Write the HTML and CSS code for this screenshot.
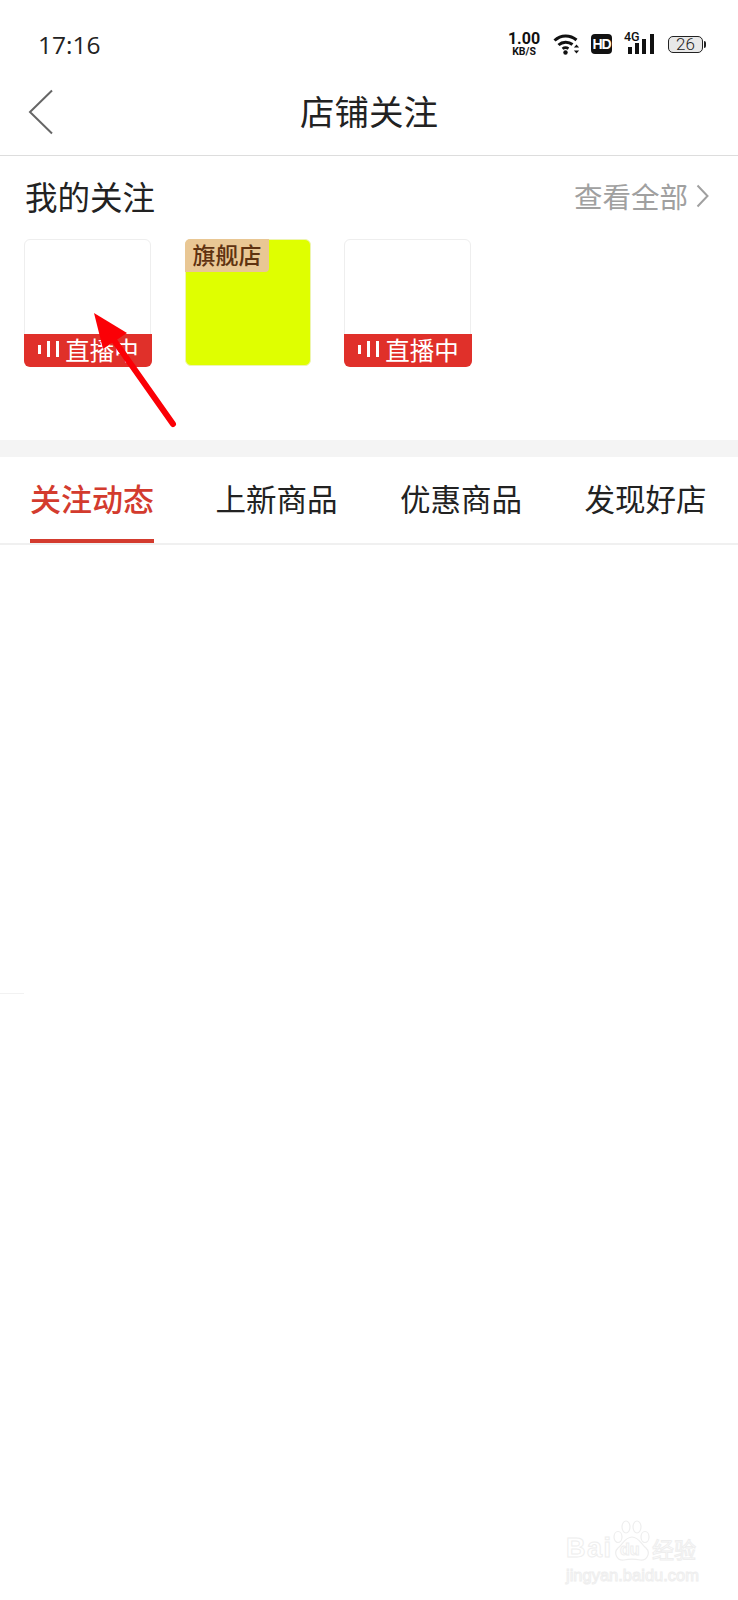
FILE: index.html
```html
<!DOCTYPE html>
<html lang="zh-CN">
<head>
    <meta charset="UTF-8">
    <meta name="viewport" content="width=device-width, initial-scale=1.0">
    <title>店铺关注</title>
    <link rel="stylesheet" href="styles.css">
</head>
<body>

    <div class="status">
        <span class="time">17:16</span>
        <div class="status-icons">
            <div class="speed">
                <span class="speed-num">1.00</span>
                <span class="speed-unit">KB/S</span>
            </div>
            <svg class="wifi" width="28" height="22" viewBox="0 0 28 22">
                <path d="M1.5 7.5C8 1.5 17 1.5 23.5 7" fill="none" stroke="#111" stroke-width="3"/>
                <path d="M5.5 12C9.5 8.3 15.5 8.3 19.5 11.5" fill="none" stroke="#111" stroke-width="3"/>
                <path d="M9.5 15.8C11.3 14.4 13.7 14.4 15.5 15.6" fill="none" stroke="#111" stroke-width="2.6"/>
                <circle cx="12.5" cy="19.5" r="2.2" fill="#111"/>
                <path d="M23.5 11.5l2.6 3h-5.2zM23.5 20.5l2.6-3h-5.2z" fill="#111"/>
            </svg>
            <span class="hd">HD</span>
            <div class="signal">
                <span class="net">4G</span>
                <svg width="26" height="20" viewBox="0 0 26 20">
                    <rect x="0" y="13" width="4" height="7" fill="#111"/>
                    <rect x="7" y="9" width="4" height="11" fill="#111"/>
                    <rect x="14" y="5" width="4" height="15" fill="#111"/>
                    <rect x="22" y="0" width="4" height="20" fill="#111"/>
                </svg>
            </div>
            <div class="battery"><span class="battery-num">26</span></div>
        </div>
    </div>

    <div class="nav">
        <svg class="back" width="26" height="46" viewBox="0 0 26 46">
            <path d="M24 1.5L2 23l22 21.5" fill="none" stroke="#666" stroke-width="2"/>
        </svg>
        <h1 class="nav-title">店铺关注</h1>
    </div>

    <div class="follow">
        <div class="follow-head">
            <span class="follow-title">我的关注</span>
            <span class="follow-all">查看全部
                <svg width="13" height="24" viewBox="0 0 13 24">
                    <path d="M1.5 1.5L11.5 12 1.5 22.5" fill="none" stroke="#a0a0a0" stroke-width="2"/>
                </svg>
            </span>
        </div>
        <div class="cards">
            <div class="card">
                <div class="live">
                    <span class="live-bars"><i></i><i></i><i></i></span>直播中
                </div>
            </div>
            <div class="card card-green">
                <span class="tag">旗舰店</span>
            </div>
            <div class="card">
                <div class="live">
                    <span class="live-bars"><i></i><i></i><i></i></span>直播中
                </div>
            </div>
        </div>
    </div>

    <div class="band"></div>

    <div class="tabs">
        <div class="tab tab-active">关注动态</div>
        <div class="tab">上新商品</div>
        <div class="tab">优惠商品</div>
        <div class="tab">发现好店</div>
    </div>

    <!-- annotation arrow drawn over the first card -->
    <svg class="arrow" width="100" height="125" viewBox="0 0 100 125">
        <path d="M3 2L36 22 12 38z" fill="#fb0006"/>
        <path d="M20 25L82 113" fill="none" stroke="#fb0006" stroke-width="6" stroke-linecap="round"/>
    </svg>

    <div class="edge-mark"></div>

    <!-- watermark -->
    <div class="wm">
        <div class="wm-top">
            <span class="wm-bai">Bai</span>
            <svg class="wm-paw" width="40" height="42" viewBox="0 0 40 42">
                <g fill="#fff" stroke="#eee" stroke-width="1.2">
                    <ellipse cx="6" cy="17" rx="4" ry="5.5"/>
                    <ellipse cx="14" cy="7" rx="4" ry="6"/>
                    <ellipse cx="25" cy="7" rx="4" ry="6"/>
                    <ellipse cx="33" cy="17" rx="4" ry="5.5"/>
                    <path d="M20 17C13 17 11 24 6 28C1 33 5 41 12 40C17 39 23 39 28 40C35 41 39 33 34 28C29 24 27 17 20 17z"/>
                </g>
            </svg>
            <span class="wm-du">du</span>
            <span class="wm-cn">经验</span>
        </div>
        <div class="wm-url">jingyan.baidu.com</div>
    </div>

</body>
</html>
```

FILE: styles.css
```css
body {
    margin: 0;
    height: 1600px;
    position: relative;
    overflow: hidden;
    background-color: #fff;
    color: #222;
    font-family: "Noto Sans CJK SC", "Noto Sans", sans-serif;
}

/* status bar */
.status {
    height: 75px;
    box-sizing: border-box;
    padding: 28px 35px 0 38px;
    display: flex;
    justify-content: space-between;
    align-items: flex-start;
}

.time {
    font-family: "Open Sans", sans-serif;
    font-size: 24.5px;
    line-height: 33px;
    color: #222;
}

.status-icons {
    display: flex;
    align-items: center;
    height: 32px;
}

.speed {
    width: 32px;
    margin-right: 13px;
    display: flex;
    flex-direction: column;
    align-items: center;
    font-family: Roboto, sans-serif;
    font-weight: 700;
    color: #111;
}

.speed-num {
    font-size: 16px;
    line-height: 14px;
}

.speed-unit {
    font-size: 10.5px;
    line-height: 11px;
}

.wifi {
    margin-right: 10px;
}

.hd {
    width: 21px;
    height: 20px;
    margin-right: 12px;
    background-color: #111;
    border-radius: 4px;
    color: #fff;
    font-family: "Liberation Sans", sans-serif;
    font-weight: 700;
    font-size: 14px;
    line-height: 20px;
    text-align: center;
    letter-spacing: -1px;
}

.signal {
    width: 30px;
    margin-right: 14px;
    display: flex;
    position: relative;
    justify-content: flex-end;
}

.net {
    position: absolute;
    left: 0;
    top: -3px;
    font-family: Roboto, sans-serif;
    font-weight: 500;
    font-size: 12.5px;
    line-height: 12px;
    color: #111;
}

.battery {
    width: 33px;
    height: 15px;
    border: 1.5px solid #222;
    border-radius: 5px;
    background-color: #e8e8e8;
    position: relative;
    text-align: center;
}

.battery::after {
    content: "";
    position: absolute;
    right: -4px;
    top: 4px;
    width: 2px;
    height: 7px;
    background-color: #222;
    border-radius: 0 2px 2px 0;
}

.battery-num {
    font-family: Roboto, sans-serif;
    font-weight: 300;
    font-size: 17px;
    line-height: 15px;
    display: block;
    color: #222;
}

/* nav */
.nav {
    height: 80px;
    border-bottom: 1px solid #ddd;
    display: flex;
    justify-content: center;
    position: relative;
}

.back {
    position: absolute;
    left: 28px;
    top: 14px;
}

.nav-title {
    margin: 0;
    font-size: 34.5px;
    font-weight: 400;
    line-height: 70px;
    color: #222;
}

/* my follows */
.follow {
    height: 284px;
    box-sizing: border-box;
    padding-top: 20px;
}

.follow-head {
    display: flex;
    justify-content: space-between;
    align-items: center;
    padding: 0 29px 0 25px;
    height: 40px;
    margin-bottom: 23px;
}

.follow-title {
    font-size: 32.5px;
    line-height: 40px;
    color: #222;
}

.follow-all {
    display: flex;
    align-items: center;
    gap: 8px;
    font-size: 28.5px;
    line-height: 40px;
    color: #a0a0a0;
}

.cards {
    display: flex;
    gap: 33px;
    padding-left: 24px;
}

.card {
    width: 127px;
    height: 127px;
    box-sizing: border-box;
    border: 1.5px solid #eee;
    border-radius: 6px;
    display: flex;
    flex-direction: column;
    justify-content: flex-end;
}

.card-green {
    background-color: #dfff00;
    border-color: #eef5b0;
    justify-content: flex-start;
    align-items: flex-start;
    margin-left: 1px;
    width: 126px;
}

.tag {
    margin: -1.5px 0 0 -1.5px;
    width: 84px;
    height: 33px;
    padding-left: 1px;
    box-sizing: border-box;
    background-color: #e9c794;
    border-radius: 5px 0 4px 0;
    color: #5f3210;
    font-size: 23px;
    font-weight: 500;
    line-height: 31px;
    text-align: center;
}

.live {
    height: 33px;
    box-sizing: border-box;
    padding: 0 0 2px 2px;
    margin: 0 -1.5px -1.5px;
    background-color: #e0302a;
    border-radius: 0 0 6px 6px;
    color: #fff;
    font-size: 24.5px;
    line-height: 31px;
    display: flex;
    align-items: center;
    justify-content: center;
    gap: 6px;
}

.live-bars {
    display: flex;
    align-items: center;
    gap: 6px;
}

.live-bars i {
    display: block;
    width: 3px;
    height: 16px;
    background-color: #fff;
}

.live-bars i:first-child {
    height: 9px;
}

.band {
    height: 17px;
    background-color: #f4f4f4;
}

/* tabs */
.tabs {
    display: flex;
    gap: 60.5px;
    padding-left: 30px;
    border-bottom: 2px solid #f0f0f0;
}

.tab {
    width: 124px;
    height: 86px;
    box-sizing: border-box;
    text-align: center;
    font-size: 30.5px;
    line-height: 82px;
    color: #222;
    white-space: nowrap;
}

.tab-active {
    font-size: 31px;
    font-weight: 500;
    color: #d33b2e;
    border-bottom: 4px solid #d33b2e;
}

/* overlays */
.arrow {
    position: absolute;
    left: 91px;
    top: 311px;
}

.edge-mark {
    position: absolute;
    left: 0;
    top: 993px;
    width: 24px;
    height: 1px;
    background-color: #f2f2f2;
}

.wm {
    position: absolute;
    left: 566px;
    top: 1518px;
    width: 136px;
    color: #fff;
    -webkit-text-stroke: 1px #eee;
}

.wm-top {
    display: flex;
    align-items: flex-end;
    height: 44px;
    position: relative;
    font-family: "Liberation Sans", sans-serif;
    font-weight: 700;
}

.wm-bai {
    font-size: 27px;
    line-height: 28px;
    width: 46px;
    letter-spacing: 1.5px;
}

.wm-paw {
    flex: none;
}

.wm-du {
    position: absolute;
    left: 54px;
    bottom: 3px;
    font-size: 16px;
    line-height: 18px;
}

.wm-cn {
    font-family: "Noto Sans CJK SC", sans-serif;
    font-weight: 400;
    font-size: 22px;
    line-height: 28px;
    white-space: nowrap;
}

.wm-url {
    margin-top: 4px;
    font-family: "Liberation Sans", sans-serif;
    font-size: 16.5px;
    line-height: 18px;
    white-space: nowrap;
}
```
